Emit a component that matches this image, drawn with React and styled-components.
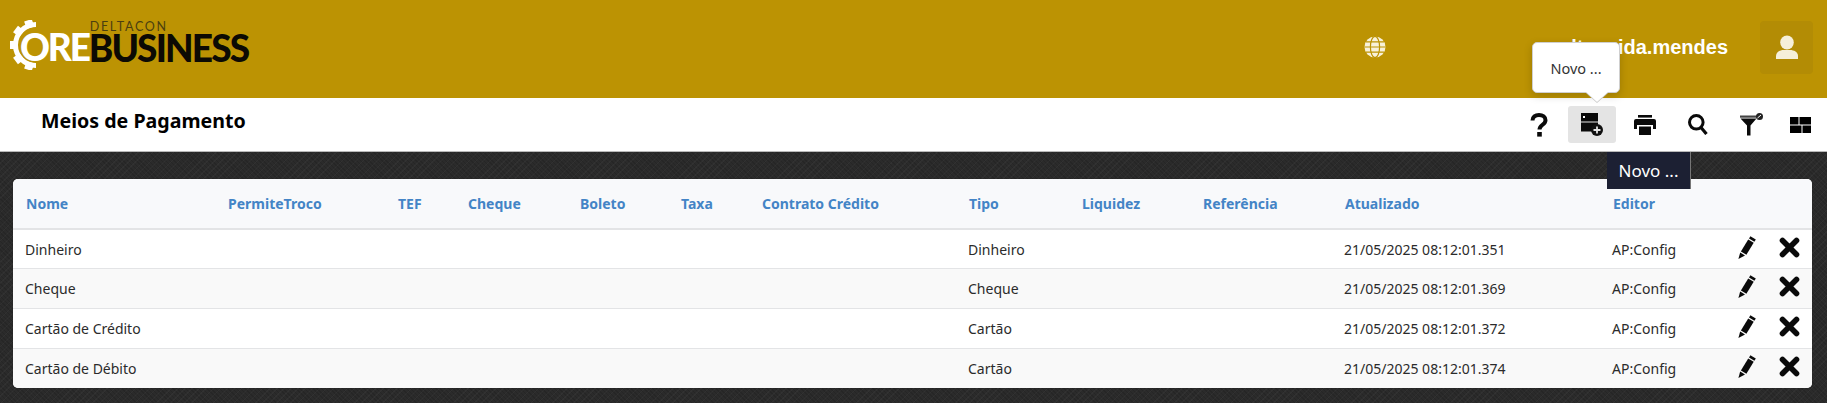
import React from "react";
import styled, { createGlobalStyle } from "styled-components";

const Global = createGlobalStyle`
  html, body { margin: 0; padding: 0; }
  body {
    min-height: 403px;
    overflow: hidden;
    font-family: "Noto Sans", "Open Sans", sans-serif;
    background-color: #2b2b2b;
    background-image:
      repeating-linear-gradient(135deg, rgba(255,255,255,.03) 0 1px, transparent 1px 5px),
      repeating-linear-gradient(45deg, rgba(0,0,0,.12) 0 1px, transparent 1px 3px);
  }
`;

const Page = styled.div`
  position: relative;
  width: 1827px;
  height: 403px;
  overflow: hidden;
`;

const Header = styled.header`
  height: 98px;
  background: #bc9303;
  display: flex;
  align-items: center;
  padding: 0 14px 4px 9px;
  box-sizing: border-box;
`;

const Logo = styled.div`
  display: flex;
  align-items: flex-end;
  height: 50px;
  font-family: "Lato", "Inter", sans-serif;
  margin-right: auto;
`;

const GearMark = styled.svg`
  width: 30px;
  height: 50px;
  margin-right: -19px;
  margin-bottom: 2px;
  flex: none;
`;

const LogoOre = styled.span`
  color: #fff;
  font-weight: 900;
  font-size: 37px;
  line-height: 30px;
  letter-spacing: -2.2px;
  margin-bottom: 10px;
`;

const LogoStack = styled.div`
  display: flex;
  flex-direction: column;
  margin-bottom: 10px;
`;

const LogoBrand = styled.span`
  color: #4b3f10;
  font-size: 12.5px;
  line-height: 12px;
  letter-spacing: 1.7px;
  font-weight: 400;
  margin-left: 1px;
`;

const LogoBusiness = styled.span`
  color: #0c0a04;
  font-weight: 900;
  font-size: 37px;
  line-height: 29px;
  letter-spacing: -1.85px;
`;

const GlobeIcon = styled.svg`
  width: 22px;
  height: 22px;
  flex: none;
  margin-right: 185px;
`;

const UserName = styled.span`
  color: #fff;
  font-family: "Liberation Sans", Arial, sans-serif;
  font-weight: 700;
  font-size: 20px;
  margin-right: 32px;
  white-space: nowrap;
`;

const UserButton = styled.button`
  width: 53px;
  height: 53px;
  border: 0;
  padding: 0;
  border-radius: 4px;
  background: #b38c05;
  display: flex;
  align-items: center;
  justify-content: center;
`;

const Toolbar = styled.div`
  height: 53px;
  background: #fff;
  border-bottom: 1px solid #b9b9b9;
  display: flex;
  align-items: center;
  padding: 0 7px 0 41px;
`;

const Title = styled.h1`
  margin: 0 auto 0 0;
  font-size: 19.6px;
  font-weight: 700;
  color: #000;
  position: relative;
  top: -4px;
`;

const Tools = styled.div`
  display: flex;
  gap: 5px;
  align-items: center;
`;

const ToolButton = styled.button`
  width: ${(p) => (p.$narrow ? "40px" : "48px")};
  height: 37px;
  border: 0;
  padding: 0;
  border-radius: 3px;
  background: ${(p) => (p.$active ? "#e4e4e4" : "transparent")};
  display: flex;
  align-items: center;
  justify-content: center;
`;

const Popover = styled.div`
  position: absolute;
  left: 1532px;
  top: 42px;
  width: 88px;
  height: 51px;
  box-sizing: border-box;
  background: #fff;
  border: 1px solid #cfcfcf;
  border-radius: 5px;
  box-shadow: 0 3px 8px rgba(0, 0, 0, .18);
  color: #333;
  font-size: 14.5px;
  display: flex;
  align-items: center;
  justify-content: center;
  &::after {
    content: "";
    position: absolute;
    left: 53px;
    bottom: -10px;
    width: 0;
    height: 0;
    border-left: 11px solid transparent;
    border-right: 11px solid transparent;
    border-top: 10px solid #fff;
    filter: drop-shadow(0 1px 0 #c8c8c8);
  }
`;

const Tip = styled.div`
  position: absolute;
  left: 1607px;
  top: 152px;
  width: 84px;
  height: 37px;
  box-sizing: border-box;
  background: #1c2033;
  border-right: 1px solid #777;
  color: #fff;
  font-size: 17px;
  display: flex;
  align-items: center;
  justify-content: center;
`;

const Card = styled.div`
  margin: 27px 15px 0 13px;
  background: #fff;
  border-radius: 5px;
  overflow: hidden;
  box-shadow: 0 0 1px rgba(0, 0, 0, .5);
`;

const Table = styled.table`
  width: 100%;
  border-collapse: collapse;
  table-layout: fixed;
  font-size: 14px;
  color: #2b2b2b;
`;

const HeadRow = styled.tr`
  background: #f8f9fb;
  height: 50px;
  border-bottom: 2px solid #e3e4e6;
`;

const Th = styled.th`
  color: #4384c6;
  font-weight: 700;
  font-size: 14px;
  text-align: left;
  padding: 0 0 0 13px;
`;

const Row = styled.tr`
  background: ${(p) => (p.$alt ? "#f9f9f9" : "#fff")};
  height: 39.75px;
  border-bottom: 1px solid #e3e4e6;
  &:last-child { border-bottom: 0; }
`;

const Td = styled.td`
  padding: 0 0 0 12px;
  white-space: nowrap;
`;

const Actions = styled.div`
  display: flex;
  align-items: center;
  gap: 23px;
  padding: 0 0 4px 6px;
  height: 23px;
`;

const Svg = styled.svg`
  display: block;
  flex: none;
`;

const widths = [202, 170, 70, 112, 101, 81, 207, 113, 121, 142, 268, 120, 92];
const heads = ["Nome", "PermiteTroco", "TEF", "Cheque", "Boleto", "Taxa", "Contrato Crédito", "Tipo", "Liquidez", "Referência", "Atualizado", "Editor", ""];
const rows = [
  ["Dinheiro", "Dinheiro", "21/05/2025 08:12:01.351"],
  ["Cheque", "Cheque", "21/05/2025 08:12:01.369"],
  ["Cartão de Crédito", "Cartão", "21/05/2025 08:12:01.372"],
  ["Cartão de Débito", "Cartão", "21/05/2025 08:12:01.374"],
];

const teeth = [-72, -38, 0, 38, 72];

const Gear = () => (
  <GearMark viewBox="0 0 30 50">
    <path d="M27 4.5 A20.5 20.5 0 0 0 27 45.5" fill="none" stroke="#fff" strokeWidth="5" />
    {teeth.map((a) => (
      <rect key={a} x="1" y="21" width="8" height="8" fill="#fff" transform={`rotate(${a} 27 25)`} />
    ))}
  </GearMark>
);

const Globe = () => (
  <GlobeIcon viewBox="0 0 22 22">
    <circle cx="11" cy="11" r="10.5" fill="#f8f1da" />
    <g fill="none" stroke="#bc9303" strokeWidth="1.2">
      <ellipse cx="11" cy="11" rx="4.6" ry="10.5" />
      <path d="M0.5 11H21.5M2 5.8H20M2 16.2H20" />
    </g>
  </GlobeIcon>
);

const Person = () => (
  <Svg width="24" height="24" viewBox="0 0 24 24" fill="#f6efd9">
    <ellipse cx="12" cy="7.5" rx="6.8" ry="7" />
    <path d="M1 24v-3c0-4 4-6 8-6h6c4 0 8 2 8 6v3z" />
  </Svg>
);

const Question = () => (
  <Svg width="18" height="24" viewBox="0 0 18 24">
    <path d="M2.5 7.5C2.5 3.8 5.3 2 9 2s6.5 2 6.5 5.2c0 4.6-6 4.6-6 9.3" fill="none" stroke="#0a0a0a" strokeWidth="4" />
    <rect x="7.2" y="19" width="4.6" height="4.6" fill="#0a0a0a" />
  </Svg>
);

const ServerPlus = () => (
  <Svg width="22" height="23" viewBox="0 0 22 23">
    <path d="M0 0h17v8.5H0z M0 9.5h17v3A7 7 0 0 0 12.2 18.5H0z" fill="#0a0a0a" fillRule="evenodd" />
    <rect x="2" y="3" width="2" height="2" fill="#fff" />
    <circle cx="16" cy="17" r="6" fill="#111" />
    <path d="M16 13.5v7M12.5 17h7" stroke="#e4e4e4" strokeWidth="1.8" />
  </Svg>
);

const Printer = () => (
  <Svg width="22" height="20" viewBox="0 0 22 20" fill="#0a0a0a">
    <path d="M4 0h14v2.6H4z" />
    <path d="M2 4h18a2 2 0 0 1 2 2v8h-3v-4H3v4H0V6a2 2 0 0 1 2-2z" />
    <path d="M5 11.5h12V20H5z" />
  </Svg>
);

const Search = () => (
  <Svg width="20" height="21" viewBox="0 0 20 21" fill="none" stroke="#0a0a0a">
    <circle cx="8.3" cy="8.3" r="6.8" strokeWidth="3" />
    <path d="M13 13.5L18.5 20" strokeWidth="3.2" />
  </Svg>
);

const Filter = () => (
  <Svg width="23" height="23" viewBox="0 0 23 23">
    <path d="M0 2.5h17v2.2H0z" fill="#444" />
    <path d="M0.5 5.5h16l-6 7v10H7v-10z" fill="#0a0a0a" />
    <circle cx="19.5" cy="3.5" r="3.5" fill="#222" />
    <path d="M17.5 5L21 2" stroke="#fff" strokeWidth="1" />
  </Svg>
);

const LayoutIcon = () => (
  <Svg width="21" height="16" viewBox="0 0 21 16">
    <path d="M0 0h8.5v7.4H0z M9.5 0H21v7.4H9.5z M0 8.4h11.5V16H0z M12.5 8.4H21V16h-8.5z" fill="#000" />
  </Svg>
);

const Pencil = () => (
  <Svg width="18" height="23" viewBox="0 0 18 23" fill="#0a0a0a">
    <path d="M12.4 0.2l5.4 3.2-1.4 2.3-5.4-3.2z" />
    <path d="M10.2 3.6l5.5 3.2-7.3 11.9-5.5-3.2z" />
    <path d="M2.2 16.6l4.8 2.8L0.4 23z" />
  </Svg>
);

const Cross = () => (
  <Svg width="21" height="21" viewBox="0 0 21 21">
    <path d="M3.5 3.5L17.5 17.5M17.5 3.5L3.5 17.5" stroke="#0a0a0a" strokeWidth="5.6" strokeLinecap="round" />
  </Svg>
);

export default function App() {
  return (
    <Page>
      <Global />
      <Header>
        <Logo>
          <Gear />
          <LogoOre>ORE</LogoOre>
          <LogoStack>
            <LogoBrand>DELTACON</LogoBrand>
            <LogoBusiness>BUSINESS</LogoBusiness>
          </LogoStack>
        </Logo>
        <Globe />
        <UserName>lt.meida.mendes</UserName>
        <UserButton aria-label="Usuário"><Person /></UserButton>
      </Header>
      <Toolbar>
        <Title>Meios de Pagamento</Title>
        <Tools>
          <ToolButton aria-label="Ajuda"><Question /></ToolButton>
          <ToolButton $active aria-label="Novo"><ServerPlus /></ToolButton>
          <ToolButton aria-label="Imprimir"><Printer /></ToolButton>
          <ToolButton aria-label="Buscar"><Search /></ToolButton>
          <ToolButton aria-label="Filtrar"><Filter /></ToolButton>
          <ToolButton $narrow aria-label="Layout"><LayoutIcon /></ToolButton>
        </Tools>
      </Toolbar>
      <Card>
        <Table>
          <colgroup>
            {widths.map((w, i) => <col key={i} width={w} />)}
          </colgroup>
          <thead>
            <HeadRow>
              {heads.map((h, i) => <Th key={i}>{h}</Th>)}
            </HeadRow>
          </thead>
          <tbody>
            {rows.map((r, i) => (
              <Row key={r[0]} $alt={i % 2 === 1}>
                <Td>{r[0]}</Td>
                <Td /><Td /><Td /><Td /><Td /><Td />
                <Td>{r[1]}</Td>
                <Td /><Td />
                <Td>{r[2]}</Td>
                <Td>AP:Config</Td>
                <Td>
                  <Actions><Pencil /><Cross /></Actions>
                </Td>
              </Row>
            ))}
          </tbody>
        </Table>
      </Card>
      <Popover>Novo ...</Popover>
      <Tip>Novo ...</Tip>
    </Page>
  );
}
